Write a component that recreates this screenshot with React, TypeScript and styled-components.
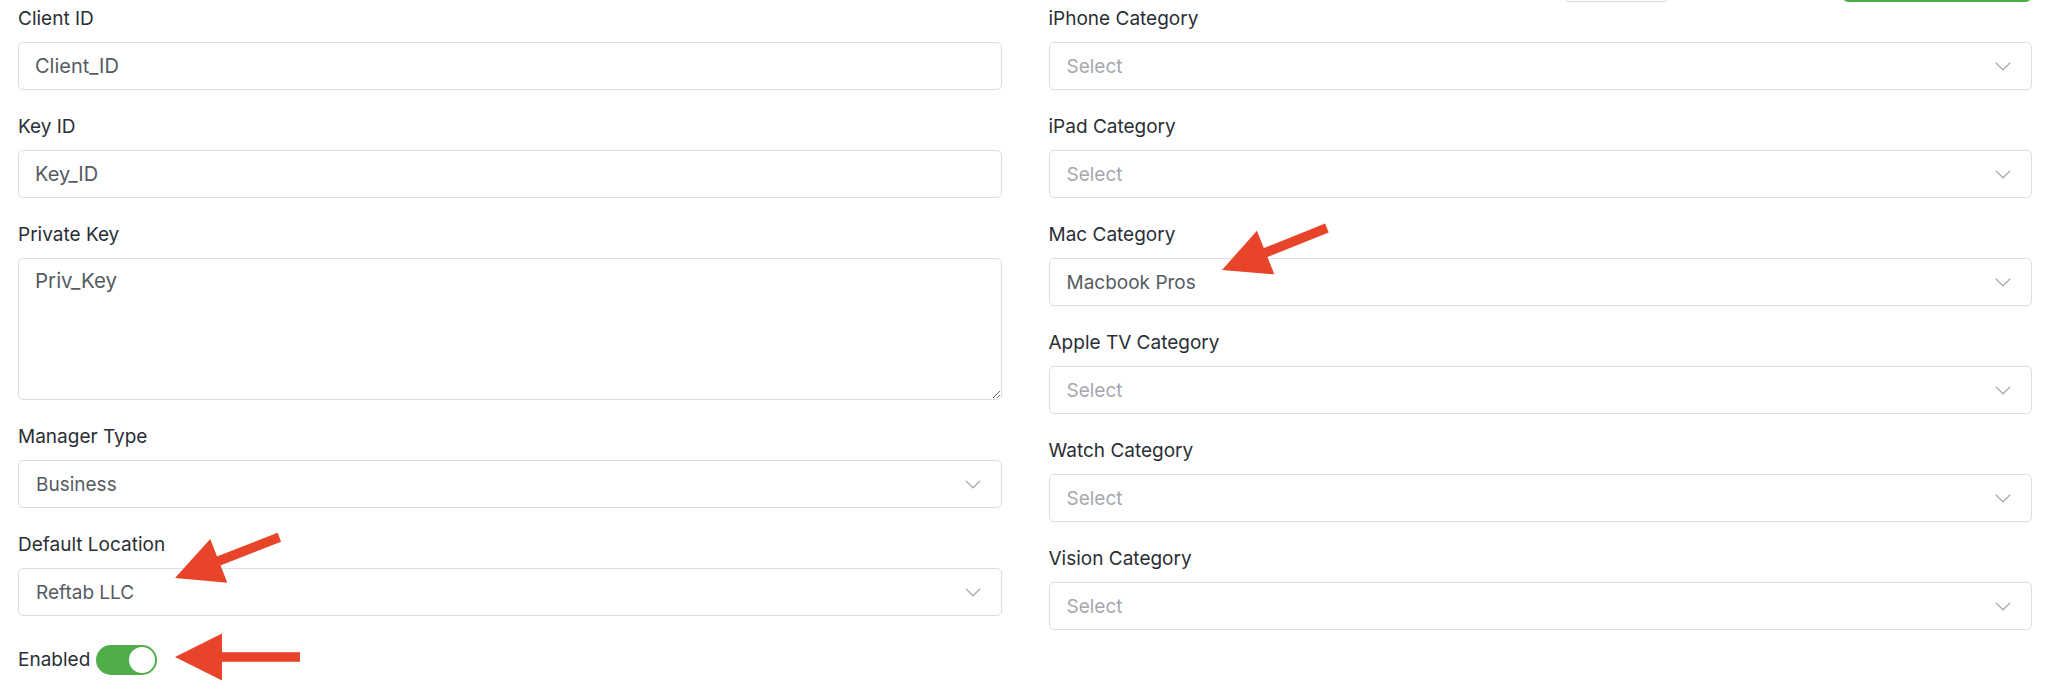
import React from "react";
import styled, { createGlobalStyle } from "styled-components";

const GlobalStyle = createGlobalStyle`
  html, body { margin: 0; padding: 0; background: #ffffff; }
  body { font-family: Inter, "Noto Sans", "Liberation Sans", sans-serif; }
  * { box-sizing: border-box; }
`;

const Viewport = styled.div`
  position: relative;
  width: 2048px;
  height: 699px;
  overflow: hidden;
  background: #ffffff;
`;

const Page = styled.div`
  margin-top: -40px;
`;

const Toolbar = styled.div`
  height: 42px;
  display: flex;
  justify-content: flex-end;
  align-items: flex-end;
  padding-right: 17px;
`;

const OutlineButton = styled.button`
  width: 104px;
  height: 40px;
  margin-right: 174px;
  border: 1px solid #d3d8df;
  border-radius: 5px;
  background: #ffffff;
`;

const PrimaryButton = styled.button`
  width: 188px;
  height: 40px;
  border: none;
  border-radius: 5px;
  background: #4fae4a;
`;

const Form = styled.div`
  display: grid;
  grid-template-columns: 1fr 1fr;
  column-gap: 47px;
  padding: 3px 16px 0 18px;
`;

const Column = styled.div`
  display: flex;
  flex-direction: column;
`;

const Field = styled.div`
  display: flex;
  flex-direction: column;
  margin-bottom: 23px;
`;

const Label = styled.label`
  font-size: 19px;
  line-height: 24px;
  color: #2a2e35;
  padding-top: 2px;
  margin-bottom: 11px;
`;

const TextInput = styled.input`
  height: 48px;
  width: 100%;
  padding: 0 16px;
  border: 1px solid #dcdee4;
  border-radius: 5px;
  font-family: inherit;
  font-size: 20px;
  color: #565b62;
  background: #ffffff;
  outline: none;
`;

const TextArea = styled.textarea`
  height: 142px;
  width: 100%;
  padding: 7px 16px;
  border: 1px solid #dcdee4;
  border-radius: 5px;
  font-family: inherit;
  font-size: 20.5px;
  line-height: 30px;
  color: #565b62;
  background: #ffffff;
  outline: none;
  resize: vertical;
`;

const SelectBox = styled.div`
  height: 48px;
  display: flex;
  align-items: center;
  justify-content: space-between;
  padding: 0 20px 0 17px;
  border: 1px solid #dcdee4;
  border-radius: 5px;
  background: #ffffff;
`;

const SelectValue = styled.span<{ $placeholder?: boolean }>`
  font-size: 19px;
  color: ${(p) => (p.$placeholder ? "#a5a8af" : "#565b62")};
`;

const ToggleRow = styled.div`
  display: flex;
  align-items: center;
  gap: 6px;
  padding-top: 6px;
`;

const ToggleLabel = styled.span`
  font-size: 19px;
  line-height: 24px;
  color: #2a2e35;
`;

const ToggleTrack = styled.div<{ $on: boolean }>`
  width: 61px;
  height: 30px;
  border-radius: 15px;
  padding: 2px;
  display: flex;
  justify-content: ${(p) => (p.$on ? "flex-end" : "flex-start")};
  background: ${(p) => (p.$on ? "#4fae4a" : "#d0d3d9")};
`;

const ToggleKnob = styled.div`
  width: 26px;
  height: 26px;
  border-radius: 50%;
  background: #ffffff;
`;

const Overlay = styled.svg`
  position: absolute;
  left: 0;
  top: 0;
  pointer-events: none;
`;

const Chevron = () => (
  <svg width="16" height="9" viewBox="0 0 16 9" fill="none">
    <path d="M0.8 0.8 L8 7.8 L15.2 0.8" stroke="#a9acb3" strokeWidth="1.3" />
  </svg>
);

const Select = ({ value, placeholder }: { value?: string; placeholder?: string }) => (
  <SelectBox>
    <SelectValue $placeholder={!value}>{value || placeholder}</SelectValue>
    <Chevron />
  </SelectBox>
);

const Arrow = ({ x, y, angle, length }: { x: number; y: number; angle: number; length: number }) => (
  <g transform={`translate(${x} ${y}) rotate(${angle})`} fill="#e8442a">
    <polygon points="0,0 47,-23.5 47,23.5" />
    <rect x="40" y="-4.8" width={length - 40} height="9.6" />
  </g>
);

const leftFields = [
  { label: "Client ID", kind: "input", value: "Client_ID" },
  { label: "Key ID", kind: "input", value: "Key_ID" },
  { label: "Private Key", kind: "textarea", value: "Priv_Key" },
  { label: "Manager Type", kind: "select", value: "Business" },
  { label: "Default Location", kind: "select", value: "Reftab LLC" },
];

const rightFields = [
  { label: "iPhone Category", value: "" },
  { label: "iPad Category", value: "" },
  { label: "Mac Category", value: "Macbook Pros" },
  { label: "Apple TV Category", value: "" },
  { label: "Watch Category", value: "" },
  { label: "Vision Category", value: "" },
];

export default function App() {
  return (
    <Viewport>
      <GlobalStyle />
      <Page>
        <Toolbar>
          <OutlineButton />
          <PrimaryButton />
        </Toolbar>
        <Form>
          <Column>
            {leftFields.map((f) => (
              <Field key={f.label}>
                <Label>{f.label}</Label>
                {f.kind === "input" && <TextInput defaultValue={f.value} />}
                {f.kind === "textarea" && <TextArea defaultValue={f.value} />}
                {f.kind === "select" && <Select value={f.value} />}
              </Field>
            ))}
            <ToggleRow>
              <ToggleLabel>Enabled</ToggleLabel>
              <ToggleTrack $on>
                <ToggleKnob />
              </ToggleTrack>
            </ToggleRow>
          </Column>
          <Column>
            {rightFields.map((f) => (
              <Field key={f.label}>
                <Label>{f.label}</Label>
                <Select value={f.value} placeholder="Select" />
              </Field>
            ))}
          </Column>
        </Form>
      </Page>
      <Overlay width="2048" height="699" viewBox="0 0 2048 699">
        <Arrow x={1222} y={270} angle={-21.8} length={113} />
        <Arrow x={175} y={578} angle={-21.3} length={112} />
        <Arrow x={175} y={657} angle={0} length={125} />
      </Overlay>
    </Viewport>
  );
}
